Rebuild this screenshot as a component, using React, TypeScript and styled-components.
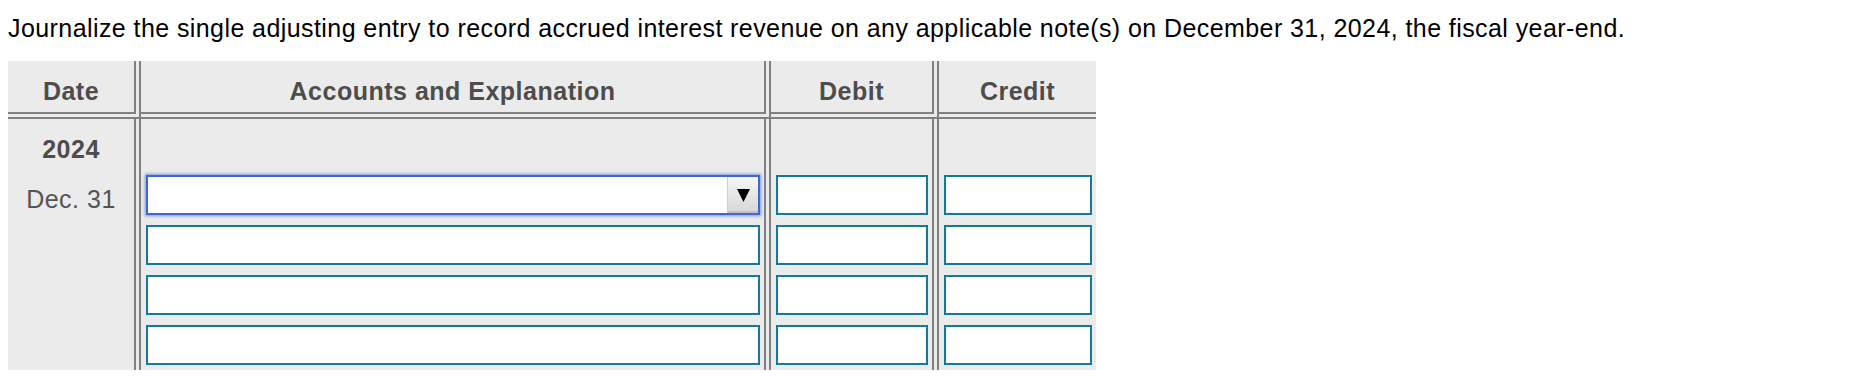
import React from "react";
import styled, { createGlobalStyle } from "styled-components";

const GlobalStyle = createGlobalStyle`
  html, body {
    margin: 0;
    padding: 0;
    background: #ffffff;
  }
  body {
    font-family: "Liberation Sans", Arial, sans-serif;
  }
`;

const Page = styled.div`
  padding: 14px 8px 0 8px;
  font-family: "Liberation Sans", Arial, sans-serif;
`;

const Prompt = styled.p`
  margin: 0;
  font-size: 25px;
  line-height: 28px;
  letter-spacing: 0.42px;
  color: #000000;
  white-space: nowrap;
`;

const Journal = styled.div`
  margin-top: 19px;
  width: 1088px;
  display: grid;
  grid-template-columns: 133px 630px 168px 157px;
  background: #ebebeb;
`;

const LINE = "#808080";

const HeadCell = styled.div<{ $last?: boolean }>`
  box-sizing: border-box;
  height: 58px;
  padding-top: 16px;
  text-align: center;
  font-size: 25px;
  line-height: 28px;
  letter-spacing: 0.5px;
  font-weight: 700;
  color: #4d4d4d;
  border-bottom: 7px double ${LINE};
  border-right: ${(p) => (p.$last ? "none" : `7px double ${LINE}`)};
`;

const DateCell = styled.div<{ $bold?: boolean; $height: number; $top: number }>`
  box-sizing: border-box;
  height: ${(p) => p.$height}px;
  padding-top: ${(p) => p.$top}px;
  text-align: center;
  font-size: 25px;
  line-height: 28px;
  letter-spacing: 0.5px;
  font-weight: ${(p) => (p.$bold ? 700 : 400)};
  color: ${(p) => (p.$bold ? "#4d4d4d" : "#555555")};
  border-right: 7px double ${LINE};
`;

const FieldCell = styled.div<{ $last?: boolean; $height?: number }>`
  box-sizing: border-box;
  height: ${(p) => p.$height ?? 50}px;
  padding: 5px 4px 5px 5px;
  border-right: ${(p) => (p.$last ? "none" : `7px double ${LINE}`)};
`;

const TextField = styled.input`
  box-sizing: border-box;
  display: block;
  width: 100%;
  height: 40px;
  margin: 0;
  padding: 0 6px;
  border: 2px solid #127b9c;
  border-radius: 0;
  background: #ffffff;
  font-family: "Liberation Sans", Arial, sans-serif;
  font-size: 20px;
  outline: none;
`;

const SelectBox = styled.div`
  box-sizing: border-box;
  display: flex;
  width: 100%;
  height: 40px;
  border: 2px solid #3d68d4;
  box-shadow: 0 0 3px 1px rgba(70, 110, 215, 0.7);
  background: #ffffff;
`;

const SelectValue = styled.div`
  flex: 1;
`;

const SelectArrow = styled.div`
  box-sizing: border-box;
  width: 31px;
  display: flex;
  align-items: center;
  justify-content: center;
  padding-top: 3px;
  background: linear-gradient(#f7f7f7, #d8d8d8);
  border-left: 1px solid #cdcdcd;
  border-bottom: 2px solid #c2c2c2;
`;

const entryRows = [0, 1, 2, 3];

export default function App() {
  return (
    <>
      <GlobalStyle />
      <Page>
        <Prompt>
          Journalize the single adjusting entry to record accrued interest
          revenue on any applicable note(s) on December 31, 2024, the fiscal
          year-end.
        </Prompt>
        <Journal>
          <HeadCell>Date</HeadCell>
          <HeadCell>Accounts and Explanation</HeadCell>
          <HeadCell>Debit</HeadCell>
          <HeadCell $last>Credit</HeadCell>

          <DateCell $bold $height={51} $top={16}>
            2024
          </DateCell>
          <FieldCell $height={51} />
          <FieldCell $height={51} />
          <FieldCell $height={51} $last />

          {entryRows.map((i) => (
            <React.Fragment key={i}>
              <DateCell $height={50} $top={15}>
                {i === 0 ? "Dec. 31" : ""}
              </DateCell>
              <FieldCell>
                {i === 0 ? (
                  <SelectBox>
                    <SelectValue />
                    <SelectArrow>
                      <svg width="13" height="13" viewBox="0 0 13 13">
                        <polygon points="0,0 13,0 6.5,13" fill="#000" />
                      </svg>
                    </SelectArrow>
                  </SelectBox>
                ) : (
                  <TextField type="text" />
                )}
              </FieldCell>
              <FieldCell>
                <TextField type="text" />
              </FieldCell>
              <FieldCell $last>
                <TextField type="text" />
              </FieldCell>
            </React.Fragment>
          ))}
        </Journal>
      </Page>
    </>
  );
}
